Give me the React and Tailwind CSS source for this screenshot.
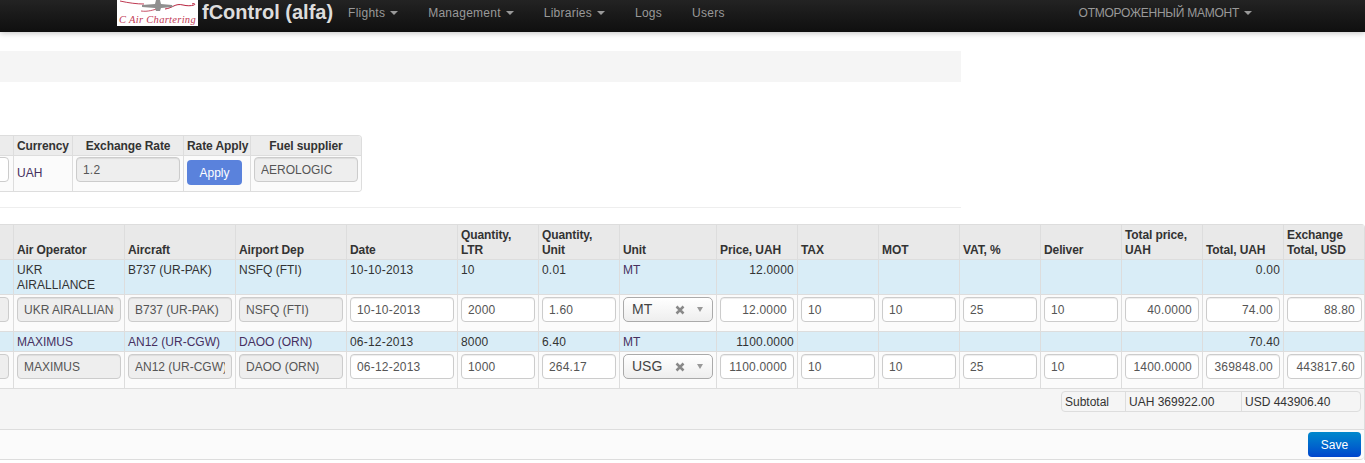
import React from "react";

const navItems = ["Flights", "Management", "Libraries", "Logs", "Users"];
const colWidths = [13, 111, 111, 111, 111, 81, 81, 97, 81, 81, 81, 81, 81, 81, 81, 82];

const headers = [
  "",
  "Air Operator",
  "Aircraft",
  "Airport Dep",
  "Date",
  "Quantity, LTR",
  "Quantity, Unit",
  "Unit",
  "Price, UAH",
  "TAX",
  "MOT",
  "VAT, %",
  "Deliver",
  "Total price, UAH",
  "Total, UAH",
  "Exchange Total, USD",
];

const rows = [
  {
    info: ["UKR AIRALLIANCE", "B737 (UR-PAK)", "NSFQ (FTI)", "10-10-2013", "10", "0.01", "MT", "12.0000", "", "", "", "", "", "0.00", ""],
    inputs: ["UKR AIRALLIANCE", "B737 (UR-PAK)", "NSFQ (FTI)", "10-10-2013", "2000", "1.60", "MT", "12.0000", "10", "10", "25", "10", "40.0000", "74.00", "88.80"],
    tall: true,
  },
  {
    info: ["MAXIMUS", "AN12 (UR-CGW)", "DAOO (ORN)", "06-12-2013", "8000", "6.40", "MT", "1100.0000", "", "", "", "", "", "70.40", ""],
    inputs: ["MAXIMUS", "AN12 (UR-CGW)", "DAOO (ORN)", "06-12-2013", "1000", "264.17", "USG", "1100.0000", "10", "10", "25", "10", "1400.0000", "369848.00", "443817.60"],
    tall: false,
  },
];

const rightInfo = [7, 13];
const rightInputs = [7, 12, 13, 14];
const disabledInputs = [0, 1, 2];

const isNumeric = (v) => /^[\d.-]+$/.test(v);

const Caret = () => (
  <span className="ml-[5px] inline-block h-0 w-0 border-x-4 border-t-4 border-x-transparent border-t-[#999999] align-middle" />
);

const Logo = () => (
  <svg width="81" height="26" viewBox="0 0 81 26" className="block shrink-0 bg-white">
    <path d="M3 1 C12 3 20 4 27 4" stroke="#b8243f" strokeWidth="0.9" fill="none" />
    <path d="M24 11 C31 12 36 10 43 8" stroke="#b8243f" strokeWidth="0.8" fill="none" />
    <path d="M48 9 C56 8 58 3 66 5 C70 6 74 6 77 5 C79 4 77 3 75 4" stroke="#b8243f" strokeWidth="1" fill="none" />
    <path d="M25 5 L38 4 L39 0 L43 0 L44 4 L55 5 L56 7 L44 8 L43 11 L39 11 L38 8 L25 7 Z" fill="#8f8f8f" />
    <text x="2" y="23" fontFamily="'Liberation Serif', serif" fontStyle="italic" fontSize="10.5" letterSpacing="0.3" fill="#c23a55">
      C Air Chartering
    </text>
  </svg>
);

const Field = ({ value, disabled, right }) => (
  <input
    readOnly
    value={value}
    className={`block h-[25px] w-full rounded-[4px] border border-[#cccccc] px-[6px] text-[12px] text-[#555555] shadow-[inset_0_1px_1px_rgba(0,0,0,0.075)] outline-none ${
      disabled ? "bg-[#eeeeee]" : "bg-white"
    } ${right ? "text-right" : "text-left"} ${isNumeric(value) ? "tracking-[0.2px]" : ""}`}
  />
);

const UnitSelect = ({ value }) => (
  <div className="flex h-[25px] w-full items-center rounded-[5px] border border-[#aaaaaa] bg-linear-to-b from-white to-[#eeeeee] pl-[8px] pr-[9px] text-[14px] text-[#444444]">
    <span className="flex-1">{value}</span>
    <svg width="10" height="10" viewBox="0 0 10 10" className="mr-[12px]">
      <path d="M1.5 1.5 L8.5 8.5 M8.5 1.5 L1.5 8.5" stroke="#888888" strokeWidth="2.5" />
    </svg>
    <span className="h-0 w-0 border-x-[3.5px] border-t-[5px] border-x-transparent border-t-[#999999]" />
  </div>
);

const Stub = ({ disabled }) => (
  <div className="flex justify-end overflow-hidden pr-[4px]">
    <div
      className={`h-[25px] w-[60px] shrink-0 rounded-[4px] border border-[#cccccc] ${
        disabled ? "bg-[#eeeeee]" : "bg-white"
      }`}
    />
  </div>
);

const FuelTable = () => (
  <div className="w-[362px] overflow-hidden rounded-r-[4px] border-y border-r border-[#dddddd]">
    <table className="w-[361px] table-fixed border-separate border-spacing-0 text-[12px]">
      <colgroup>
        <col className="w-[13px]" />
        <col className="w-[59px]" />
        <col className="w-[111px]" />
        <col className="w-[67px]" />
        <col className="w-[111px]" />
      </colgroup>
      <thead>
        <tr className="h-[19px] bg-[#ececec] font-bold tracking-[-0.1px] text-[#333333]">
          <th />
          <th className="border-l border-[#dddddd] px-[3px] text-left">Currency</th>
          <th className="border-l border-[#dddddd] px-[3px] text-center">Exchange Rate</th>
          <th className="whitespace-nowrap border-l border-[#dddddd] px-[3px] text-center">Rate Apply</th>
          <th className="border-l border-[#dddddd] px-[3px] text-center">Fuel supplier</th>
        </tr>
      </thead>
      <tbody>
        <tr className="h-[36px] bg-[#fbfbfb] align-top">
          <td className="border-t border-[#dddddd] pt-px">
            <Stub />
          </td>
          <td className="border-l border-t border-[#dddddd] px-[3px] pt-[10px] leading-[15px] text-[#46305f]">UAH</td>
          <td className="border-l border-t border-[#dddddd] px-[3px] pt-px">
            <Field value="1.2" disabled />
          </td>
          <td className="border-l border-t border-[#dddddd] px-[3px] pt-[4px]">
            <button className="block h-[25px] w-[55px] rounded-[4px] bg-[#5a82dc] text-[12px] text-white">
              Apply
            </button>
          </td>
          <td className="border-l border-t border-[#dddddd] px-[3px] pt-px">
            <Field value="AEROLOGIC" disabled />
          </td>
        </tr>
      </tbody>
    </table>
  </div>
);

const FlightsTable = () => (
  <table className="w-[1364px] table-fixed border-separate border-spacing-0 text-[12px] leading-[15px] text-[#333333]">
    <colgroup>
      {colWidths.map((w, i) => (
        <col key={i} style={{ width: w }} />
      ))}
    </colgroup>
    <thead>
      <tr className="h-[35px] bg-[#e9e9e9]">
        {headers.map((h, i) => (
          <th
            key={i}
            className={`border-t border-[#dddddd] px-[3px] pb-px pt-[3px] text-left align-bottom font-bold tracking-[-0.1px] ${
              i > 0 ? "border-l" : ""
            }`}
          >
            {h}
          </th>
        ))}
      </tr>
    </thead>
    <tbody>
      {rows.map((row, r) => (
        <React.Fragment key={r}>
          <tr className={`${row.tall ? "h-[35px]" : "h-[20px]"} bg-[#d9edf7] align-top`}>
            <td className="border-t border-[#dddddd]" />
            {row.info.map((v, i) => (
              <td
                key={i}
                className={`border-l border-t border-[#dddddd] px-[3px] pb-px pt-[3px] ${
                  rightInfo.includes(i) ? "text-right" : "text-left"
                } ${isNumeric(v) ? "tracking-[0.2px]" : ""} ${
                  i === 6 || (r === 1 && i < 3) ? "text-[#46305f]" : ""
                }`}
              >
                {v}
              </td>
            ))}
          </tr>
          <tr className="h-[37px] bg-[#fbfbfb] align-top">
            <td className="border-t border-[#dddddd] pt-[2px]">
              <Stub disabled />
            </td>
            {row.inputs.map((v, i) => (
              <td key={i} className="border-l border-t border-[#dddddd] px-[3px] pt-[2px]">
                {i === 6 ? (
                  <UnitSelect value={v} />
                ) : (
                  <Field value={v} disabled={disabledInputs.includes(i)} right={rightInputs.includes(i)} />
                )}
              </td>
            ))}
          </tr>
        </React.Fragment>
      ))}
    </tbody>
  </table>
);

export default function App() {
  return (
    <div className="h-[463px] w-[1365px] overflow-hidden bg-white font-['Liberation_Sans',Arial,sans-serif] text-[12px] text-[#333333]">
      {/* Navbar */}
      <nav className="flex h-[32px] items-start bg-linear-to-b from-[#232323] to-[#0f0f0f] pl-[117px] shadow-[0_1px_6px_rgba(0,0,0,0.25)]">
        <Logo />
        <span className="ml-[4px] text-[20px] font-bold leading-[24px] text-[#dddddd]">fControl (alfa)</span>
        <ul className="flex">
          {navItems.map((item, i) => (
            <li key={item} className="flex h-[25px] items-center whitespace-nowrap px-[15px] tracking-[0.25px] text-[#999999]">
              {item}
              {i < 3 && <Caret />}
            </li>
          ))}
        </ul>
        <div className="ml-auto mr-[113px] flex h-[25px] items-center whitespace-nowrap tracking-[-0.25px] text-[#999999]">
          ОТМОРОЖЕННЫЙ МАМОНТ
          <Caret />
        </div>
      </nav>

      {/* Breadcrumb band */}
      <div className="mt-[19px] h-[31px] w-[961px] bg-[#f5f5f5]" />

      <div className="mt-[53px]">
        <FuelTable />
      </div>
      <div className="mt-[15px] h-px w-[961px] bg-[#eeeeee]" />

      <div className="mt-[16px] w-[1365px] overflow-hidden rounded-tr-[4px] border-r border-[#dddddd]">
        <FlightsTable />
        <div className="flex h-[41px] justify-end border-t border-[#dddddd] bg-[#f5f5f5] pr-[3px] pt-[2px]">
          <div className="flex h-[21px] w-[300px] rounded-[4px] border border-[#dddddd] leading-[21px]">
            <span className="w-[63px] pl-[3px]">Subtotal</span>
            <span className="w-[116px] border-l border-[#dddddd] pl-[3px]">UAH 369922.00</span>
            <span className="flex-1 border-l border-[#dddddd] pl-[3px]">USD 443906.40</span>
          </div>
        </div>
        <div className="flex h-[31px] justify-end rounded-br-[4px] border-y border-[#dddddd] bg-[#fbfbfb] pr-[3px] pt-[2px]">
          <button className="h-[25px] w-[53px] rounded-[4px] bg-linear-to-b from-[#0088cc] to-[#0044cc] text-[12px] text-white">
            Save
          </button>
        </div>
      </div>
    </div>
  );
}
